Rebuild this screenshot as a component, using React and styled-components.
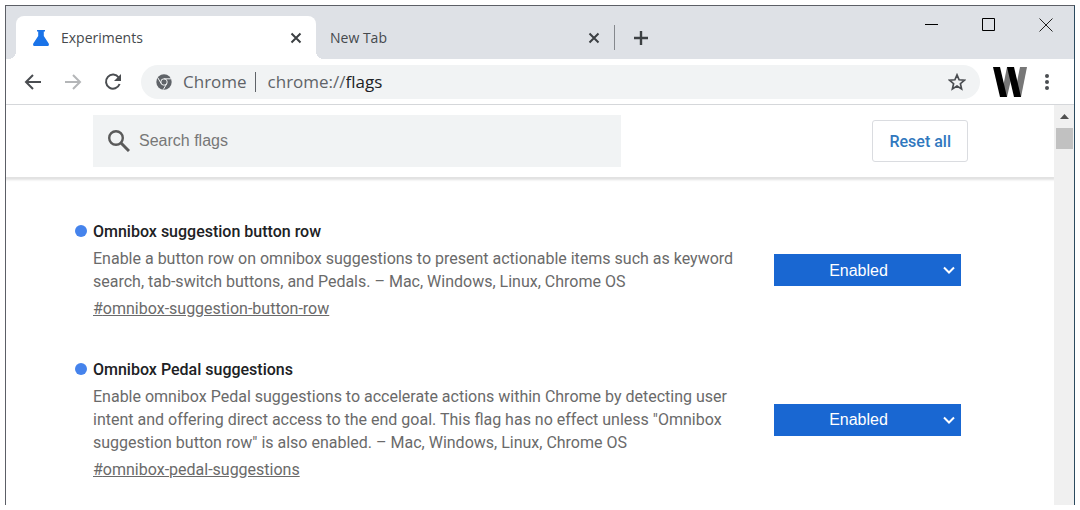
import { useState } from "react";
import styled, { createGlobalStyle } from "styled-components";

const flags = [
  {
    id: "omnibox-suggestion-button-row",
    name: "Omnibox suggestion button row",
    description:
      "Enable a button row on omnibox suggestions to present actionable items such as keyword search, tab-switch buttons, and Pedals. – Mac, Windows, Linux, Chrome OS",
  },
  {
    id: "omnibox-pedal-suggestions",
    name: "Omnibox Pedal suggestions",
    description:
      'Enable omnibox Pedal suggestions to accelerate actions within Chrome by detecting user intent and offering direct access to the end goal. This flag has no effect unless "Omnibox suggestion button row" is also enabled. – Mac, Windows, Linux, Chrome OS',
  },
];

function CloseIcon() {
  return (
    <svg width="12" height="12" viewBox="0 0 12 12" stroke="currentColor" strokeWidth="2">
      <path d="M1.5 1.5l9 9M10.5 1.5l-9 9" />
    </svg>
  );
}

function FlaskIcon() {
  return (
    <svg width="16" height="16" viewBox="0 0 16 16" fill="#1a73e8">
      <path d="M4 0h8v1.6h-1.2v4.4l4.9 7.4c.6 1.400-.1 2.600-1.400 2.600H1.700c-1.300 0-2-1.200-1.400-2.600L5.200 6V1.600H4z" />
    </svg>
  );
}

function ChromeIcon() {
  return (
    <svg width="16" height="16" viewBox="0 0 16 16">
      <circle cx="8" cy="8" r="7.7" fill="#5f6368" />
      <circle cx="8" cy="8" r="3.2" fill="none" stroke="#f1f3f4" />
      <path
        d="M8 4.8h7M5.2 9.6L1.7 3.6M10.8 9.6l-3.5 6"
        fill="none"
        stroke="#f1f3f4"
      />
    </svg>
  );
}

function ExtensionLogo() {
  return (
    <svg width="34" height="30" viewBox="0 0 34 30">
      <path d="M8 30l6-30h7l-7 30z" fill="#777" />
      <path d="M21 30l6-30h7l-6 30z" fill="#777" />
      <path d="M0 0h7l7 30H7z" fill="#000" />
      <path d="M14 0h7l7 30h-7z" fill="#000" />
    </svg>
  );
}

function Flag({ flag }) {
  const [value, setValue] = useState("Enabled");

  return (
    <FlagRow>
      <Dot />
      <FlagText>
        <FlagName id={flag.id}>{flag.name}</FlagName>
        <Description>{flag.description}</Description>
        <Permalink href={`#${flag.id}`}>#{flag.id}</Permalink>
      </FlagText>
      <SelectWrapper>
        <Select
          aria-labelledby={flag.id}
          value={value}
          onChange={(e) => setValue(e.target.value)}
        >
          <option>Default</option>
          <option>Enabled</option>
          <option>Disabled</option>
        </Select>
        <Chevron viewBox="0 0 12 8">
          <path d="M1 1.5l5 5 5-5" fill="none" stroke="#fff" strokeWidth="2" />
        </Chevron>
      </SelectWrapper>
    </FlagRow>
  );
}

function App() {
  return (
    <>
      <GlobalStyle />
      <Window>
        <TitleBar>
          <Tab $active>
            <FlaskIcon />
            <TabTitle>Experiments</TabTitle>
            <IconButton aria-label="Close Experiments">
              <CloseIcon />
            </IconButton>
          </Tab>
          <Tab>
            <TabTitle>New Tab</TabTitle>
            <IconButton aria-label="Close New Tab">
              <CloseIcon />
            </IconButton>
          </Tab>
          <TabDivider />
          <IconButton aria-label="New tab">
            <svg width="16" height="16" viewBox="0 0 16 16" stroke="currentColor" strokeWidth="2.4">
              <path d="M8 1v14M1 8h14" />
            </svg>
          </IconButton>
          <WindowControls>
            <IconButton aria-label="Minimize">
              <svg width="14" height="14" viewBox="0 0 14 14" stroke="#000">
                <path d="M0 6.5h13" />
              </svg>
            </IconButton>
            <IconButton aria-label="Maximize">
              <svg width="14" height="14" viewBox="0 0 14 14" fill="none" stroke="#000">
                <path d="M.5.5h12v12H.5z" />
              </svg>
            </IconButton>
            <IconButton aria-label="Close">
              <svg width="14" height="14" viewBox="0 0 14 14" stroke="#222">
                <path d="M.5.5l13 13M13.5.5l-13 13" />
              </svg>
            </IconButton>
          </WindowControls>
        </TitleBar>

        <Toolbar>
          <NavButtons>
            <IconButton aria-label="Back">
              <svg width="18" height="16" viewBox="0 0 18 16" fill="none" stroke="#4a4d51" strokeWidth="2">
                <path d="M17 8H2M9 1L2 8l7 7" />
              </svg>
            </IconButton>
            <IconButton aria-label="Forward">
              <svg width="18" height="16" viewBox="0 0 18 16" fill="none" stroke="#b4b6b8" strokeWidth="2">
                <path d="M1 8h15M9 1l7 7-7 7" />
              </svg>
            </IconButton>
            <IconButton aria-label="Reload">
              <svg width="18" height="18" viewBox="0 0 18 18">
                <path
                  d="M14.7 4.5A7 7 0 1 0 15.6 11"
                  fill="none"
                  stroke="#4a4d51"
                  strokeWidth="2"
                />
                <path d="M17 1v7h-7z" fill="#4a4d51" />
              </svg>
            </IconButton>
          </NavButtons>
          <Omnibox>
            <ChromeIcon />
            <SiteName>Chrome</SiteName>
            <OmniboxDivider />
            <Address>
              <label htmlFor="address">chrome://</label>
              <AddressInput id="address" defaultValue="flags" />
            </Address>
            <IconButton aria-label="Bookmark this tab">
              <svg width="18" height="18" viewBox="0 0 18 18" fill="none" stroke="#4a4d51" strokeWidth="1.7">
                <path d="M9 1.9l2.1 4.9 5.3.4-4 3.5 1.2 5.2L9 13.1l-4.6 2.8 1.2-5.2-4-3.5 5.3-.4z" />
              </svg>
            </IconButton>
          </Omnibox>
          <ToolbarActions>
            <IconButton aria-label="Extension">
              <ExtensionLogo />
            </IconButton>
            <IconButton aria-label="Menu">
              <svg width="4" height="18" viewBox="0 0 4 18" fill="#4a4d51">
                <circle cx="2" cy="3" r="2" />
                <circle cx="2" cy="9" r="2" />
                <circle cx="2" cy="15" r="2" />
              </svg>
            </IconButton>
          </ToolbarActions>
        </Toolbar>

        <Viewport>
          <Page>
            <Header>
              <Search>
                <svg width="22" height="22" viewBox="0 0 22 22" fill="none" stroke="#5a5a5a">
                  <circle cx="8" cy="8" r="6.8" strokeWidth="2.4" />
                  <path d="M13 13l8 8" strokeWidth="3" />
                </svg>
                <SearchInput aria-label="Search flags" placeholder="Search flags" />
              </Search>
              <ResetButton>Reset all</ResetButton>
            </Header>
            <FlagList>
              {flags.map((flag) => (
                <Flag key={flag.id} flag={flag} />
              ))}
            </FlagList>
          </Page>
          <Scrollbar>
            <svg width="9" height="5" viewBox="0 0 9 5" fill="#505050">
              <path d="M0 5l4.5-5L9 5z" />
            </svg>
            <Thumb />
          </Scrollbar>
        </Viewport>
      </Window>
    </>
  );
}

export default App;

const GlobalStyle = createGlobalStyle`
  * {
    box-sizing: border-box;
  }

  body {
    margin: 0;
    background-color: #fff;
    font-family: Roboto, sans-serif;
  }

  button,
  input,
  select {
    margin: 0;
    padding: 0;
    border: none;
    font: inherit;
  }

  svg {
    display: block;
    flex-shrink: 0;
  }
`;

const Window = styled.div`
  display: flex;
  flex-direction: column;
  height: calc(100vh - 10px);
  margin: 5px;
  border: 1px solid #5c5f66;
  border-right-color: #2b4a5e;
  border-bottom: none;
  overflow: hidden;
`;

const IconButton = styled.button`
  display: flex;
  align-items: center;
  justify-content: center;
  background: none;
  color: #3c4043;
  cursor: pointer;
`;

const TitleBar = styled.div`
  display: flex;
  align-items: flex-end;
  height: 53px;
  padding-left: 10px;
  background-color: #dee1e6;

  > button {
    height: 43px;
    margin-left: 18px;
  }
`;

const Tab = styled.div`
  display: flex;
  align-items: center;
  gap: 12px;
  width: ${({ $active }) => ($active ? "300px" : "298px")};
  height: 43px;
  padding: 0 14px 0 ${({ $active }) => ($active ? "17px" : "14px")};
  border-radius: 8px 8px 0 0;
  background-color: ${({ $active }) => ($active ? "#fff" : "transparent")};
  color: #45494d;
  position: relative;

  /* the flared foot on both sides of the open tab */
  &::before,
  &::after {
    content: ${({ $active }) => ($active ? '""' : "none")};
    position: absolute;
    bottom: 0;
    width: 8px;
    height: 8px;
  }

  &::before {
    right: 100%;
    background: radial-gradient(circle at 0 0, transparent 8px, #fff 8px);
  }

  &::after {
    left: 100%;
    background: radial-gradient(circle at 100% 0, transparent 8px, #fff 8px);
  }
`;

const TabTitle = styled.span`
  flex: 1;
  font-family: "Open Sans", sans-serif;
  font-size: 14px;
`;

const TabDivider = styled.div`
  width: 1px;
  height: 25px;
  margin-bottom: 9px;
  background-color: #85888d;
`;

const WindowControls = styled.div`
  display: flex;
  align-self: flex-start;
  gap: 43px;
  margin-left: auto;
  padding: 12px 21px 0 0;
`;

const Toolbar = styled.div`
  display: flex;
  align-items: center;
  gap: 13px;
  height: 46px;
  padding: 0 25px 0 18px;
  border-bottom: 1px solid #d5d7da;
  background-color: #fff;
`;

const NavButtons = styled.div`
  display: flex;
  gap: 22px;
  padding-right: 6px;
`;

const Omnibox = styled.div`
  display: flex;
  align-items: center;
  flex: 1;
  height: 34px;
  padding: 0 14px 0 15px;
  border-radius: 17px;
  background-color: #f1f3f4;
  color: #5f6368;
  font-family: "Open Sans", sans-serif;
  font-size: 17px;
`;

const SiteName = styled.span`
  margin-left: 11px;
`;

const OmniboxDivider = styled.div`
  width: 1px;
  height: 20px;
  margin: 0 12px 0 8px;
  background-color: #5f6368;
`;

const Address = styled.div`
  display: flex;
  flex: 1;
`;

const AddressInput = styled.input`
  flex: 1;
  min-width: 0;
  background: none;
  color: #202124;
  outline: none;
`;

const ToolbarActions = styled.div`
  display: flex;
  align-items: center;
  gap: 18px;
`;

const Viewport = styled.div`
  display: flex;
  flex: 1;
  min-height: 0;
`;

const Page = styled.main`
  flex: 1;
  min-width: 0;
  overflow: hidden;
`;

const Header = styled.header`
  display: flex;
  align-items: center;
  justify-content: space-between;
  gap: 24px;
  padding: 10px 86px 10px 87px;
  box-shadow: 0 2px 2px 1px #e2e2e2;
`;

const Search = styled.div`
  display: flex;
  align-items: center;
  flex: 0 1 528px;
  gap: 9px;
  height: 52px;
  padding: 0 15px;
  background-color: #f1f3f4;
`;

const SearchInput = styled.input`
  flex: 1;
  min-width: 0;
  background: none;
  font-family: "Liberation Sans", Arial, sans-serif;
  font-size: 16px;
  outline: none;

  &::placeholder {
    color: #777;
  }
`;

const ResetButton = styled.button`
  height: 42px;
  padding: 0 16px;
  border: 1px solid #dadce0;
  border-radius: 3px;
  background-color: #fff;
  color: #3078be;
  font-size: 16px;
  font-weight: 500;
  cursor: pointer;
`;

const FlagList = styled.div`
  display: flex;
  flex-direction: column;
  gap: 38px;
  padding: 43px 93px 38px 69px;
`;

const FlagRow = styled.section`
  display: flex;
  align-items: center;
`;

const Dot = styled.span`
  align-self: flex-start;
  width: 12px;
  height: 12px;
  margin: 5px 6px 0 0;
  border-radius: 50%;
  background-color: #4583ec;
`;

const FlagText = styled.div`
  display: flex;
  flex-direction: column;
  align-items: flex-start;
  flex: 1;
  gap: 4px;
  margin-right: 24px;
  font-size: 16px;
  line-height: 23px;
  color: #6a6a6a;
`;

const FlagName = styled.h3`
  margin: 0;
  color: #202124;
  font-size: 16px;
  font-weight: 500;
`;

const Description = styled.p`
  margin: 0;
`;

const Permalink = styled.a`
  color: inherit;
`;

const SelectWrapper = styled.div`
  display: grid;
  align-items: center;
  width: 187px;

  > * {
    grid-area: 1 / 1;
  }
`;

const Select = styled.select`
  height: 32px;
  padding-right: 18px;
  appearance: none;
  border-radius: 0;
  background-color: #1967d2;
  color: #fff;
  font-family: "Liberation Sans", Arial, sans-serif;
  font-size: 16px;
  text-align: center;
  text-align-last: center;
  cursor: pointer;
`;

const Chevron = styled.svg`
  justify-self: end;
  width: 12px;
  height: 8px;
  margin-right: 6px;
  pointer-events: none;
`;

const Scrollbar = styled.div`
  display: flex;
  flex-direction: column;
  align-items: center;
  gap: 9px;
  width: 20px;
  padding: 9px 1px 0 2px;
  background-color: #f0f0f0;
`;

const Thumb = styled.div`
  width: 100%;
  height: 21px;
  background-color: #c1c1c1;
`;
